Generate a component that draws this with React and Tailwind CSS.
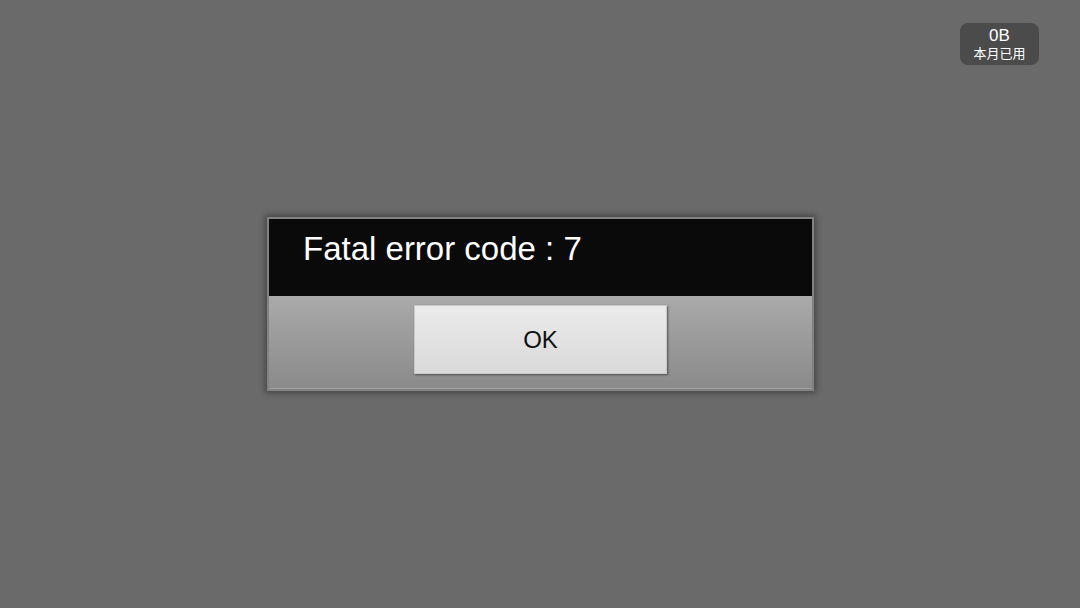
export default function App() {
  return (
    <div
      className="relative w-[1080px] h-[608px] bg-[#6a6a6a] flex items-center justify-center overflow-hidden"
      style={{ fontFamily: '"Liberation Sans", Arial, "Noto Sans CJK SC", sans-serif' }}
    >
      <div className="absolute left-[960px] top-[23px] w-[79px] h-[42px] rounded-[8px] bg-[#4b4b4b] flex flex-col items-center justify-center text-white">
        <div className="text-[17px] leading-[17px]">0B</div>
        <div className="text-[13px] leading-[17px]" style={{ fontFamily: '"Noto Sans CJK SC", sans-serif' }}>本月已用</div>
      </div>

      <div className="ml-[1px] w-[547px] border-2 border-[#828282] shadow-[0_0_6px_2px_rgba(0,0,0,0.35)] flex flex-col">
        <div className="h-[77px] bg-[#0a0a0a] flex items-start pl-[34px] pt-[11px]">
          <span className="text-white text-[33px] leading-[38px]">Fatal error code : 7</span>
        </div>
        <div className="h-[93px] bg-gradient-to-b from-[#aaaaaa] to-[#8a8a8a] flex justify-center pt-[9px] border-b border-[#a2a2a2]">
          <div className="w-[253px] h-[69px] bg-gradient-to-b from-[#ebebeb] to-[#d9d9d9] border border-[#c8c8c8] shadow-[1px_1px_2px_rgba(0,0,0,0.45)] flex items-center justify-center">
            <span className="text-[#111] text-[24px] leading-none">OK</span>
          </div>
        </div>
      </div>
    </div>
  );
}
